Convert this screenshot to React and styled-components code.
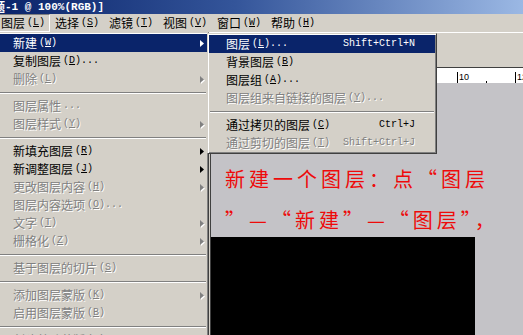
import React from "react";
import styled, { createGlobalStyle } from "styled-components";

const GlobalStyle = createGlobalStyle`
  html, body { margin: 0; padding: 0; background: #d4d0c8; overflow: hidden; }
  body { font-family: "Noto Sans CJK SC", sans-serif; }
  * { box-sizing: border-box; }
`;

const Screen = styled.div`
  position: relative;
  width: 523px;
  height: 335px;
  overflow: hidden;
  background: #d4d0c8;
  display: flex;
  flex-direction: column;
`;

const TitleBar = styled.div`
  height: 14px;
  flex-shrink: 0;
  display: flex;
  align-items: center;
  overflow: hidden;
  white-space: nowrap;
  background: linear-gradient(90deg, #0a246a 0%, #34559a 45%, #9bb8e4 100%);
`;

const TitleCjk = styled.span`
  font-family: "Noto Sans CJK SC", sans-serif;
  font-weight: 700;
  font-size: 12px;
  line-height: 14px;
  color: #fff;
  margin-left: -7px;
`;

const TitleMono = styled.span`
  font-family: "Liberation Mono", monospace;
  font-weight: 700;
  font-size: 11px;
  line-height: 14px;
  color: #fff;
`;

const MenuBar = styled.div`
  height: 18px;
  flex-shrink: 0;
  display: flex;
  margin-left: -4px;
`;

const MenuTitle = styled.div`
  width: 54px;
  display: flex;
  align-items: center;
  justify-content: center;
  border: 1px solid transparent;
  color: #000;
  ${(p) => p.$pressed && `border-color: #808080 #ffffff #ffffff #808080;`}
`;

const Cjk = styled.span`
  font-family: "Noto Sans CJK SC", sans-serif;
  font-size: 12px;
  line-height: 16px;
`;

const Key = styled.span`
  font-family: "Liberation Mono", monospace;
  font-size: 10px;
  line-height: 16px;
  margin-left: 2px;
  white-space: pre;
`;

const Workspace = styled.div`
  flex: 1;
  display: flex;
  flex-direction: column;
  min-height: 0;
`;

const OptionsBar = styled.div`
  height: 35px;
  flex-shrink: 0;
  border-top: 1px solid #ffffff;
  background: #d4d0c8;
`;

const DocRow = styled.div`
  flex: 1;
  display: flex;
  min-height: 0;
`;

const Dock = styled.div`
  width: 210px;
  flex-shrink: 0;
`;

const DocWindow = styled.div`
  flex: 1;
  display: flex;
  flex-direction: column;
  border-left: 1px solid #404040;
  border-top: 1px solid #404040;
  min-width: 0;
`;

const RulerBar = styled.div`
  height: 15px;
  flex-shrink: 0;
  background: #ffffff;
  overflow: hidden;
`;

const Canvas = styled.div`
  flex: 1;
  display: flex;
  flex-direction: column;
  background: #c4c3c7;
  padding: 75px 0 0 14px;
  min-height: 0;
`;

const Caption = styled.div`
  color: #ee0a0a;
  font-family: "Noto Sans CJK SC", sans-serif;
  font-size: 20px;
  line-height: 41px;
  letter-spacing: 4px;
  white-space: nowrap;
`;

const Artboard = styled.div`
  flex: 1;
  width: 264px;
  background: #000;
  margin: -3px 0 0 -14px;
`;

const Popup = styled.div`
  position: absolute;
  left: ${(p) => p.$left}px;
  top: ${(p) => p.$top}px;
  width: ${(p) => p.$width}px;
  background: #d4d0c8;
  border: 1px solid;
  border-color: #d4d0c8 #404040 #404040 #d4d0c8;
  box-shadow: inset 1px 1px #ffffff, inset -1px -1px #808080;
  padding: 1px;
`;

const Row = styled.div`
  height: 18px;
  display: flex;
  align-items: center;
  padding-left: 17px;
  white-space: nowrap;
  color: ${(p) => (p.$active ? "#ffffff" : p.$disabled ? "#808080" : "#000000")};
  background: ${(p) => (p.$active ? "#0a246a" : "transparent")};
  text-shadow: ${(p) => (p.$disabled && !p.$active ? "1px 1px 0 #ffffff" : "none")};
`;

const Shortcut = styled.span`
  margin-left: auto;
  margin-right: 20px;
  font-family: "Liberation Mono", monospace;
  font-size: 10px;
  line-height: 16px;
`;

const ArrowBox = styled.svg`
  margin-left: auto;
  margin-right: 3px;
  flex-shrink: 0;
  overflow: visible;
`;

const Separator = styled.div`
  height: 9px;
  display: flex;
  align-items: center;
  padding: 0 1px;
  &::after {
    content: "";
    flex: 1;
    border-top: 1px solid #808080;
    border-bottom: 1px solid #ffffff;
  }
`;

const Arrow = ({ color, emboss }) => (
  <ArrowBox width="4" height="7" viewBox="0 0 4 7">
    {emboss && <path d="M1 1 L5 4.5 L1 8 Z" fill="#ffffff" />}
    <path d="M0 0 L4 3.5 L0 7 Z" fill={color} />
  </ArrowBox>
);

const Label = ({ text, k, dots }) => (
  <>
    <Cjk>{text}</Cjk>
    {(k || dots) && (
      <Key>
        {k && (
          <>
            (<u>{k}</u>)
          </>
        )}
        {dots ? "..." : ""}
      </Key>
    )}
  </>
);

const Item = ({ text, k, dots, arrow, shortcut, disabled, active }) => (
  <Row $active={active} $disabled={disabled}>
    <Label text={text} k={k} dots={dots} />
    {shortcut && <Shortcut>{shortcut}</Shortcut>}
    {arrow && (
      <Arrow
        color={active ? "#ffffff" : disabled ? "#808080" : "#000000"}
        emboss={disabled && !active}
      />
    )}
  </Row>
);

const layerMenu = [
  { text: "新建", k: "W", arrow: true, active: true },
  { text: "复制图层", k: "D", dots: true },
  { text: "删除", k: "L", arrow: true, disabled: true },
  "sep",
  { text: "图层属性", dots: true, disabled: true },
  { text: "图层样式", k: "Y", arrow: true, disabled: true },
  "sep",
  { text: "新填充图层", k: "R", arrow: true },
  { text: "新调整图层", k: "J", arrow: true },
  { text: "更改图层内容", k: "H", arrow: true, disabled: true },
  { text: "图层内容选项", k: "O", dots: true, disabled: true },
  { text: "文字", k: "T", arrow: true, disabled: true },
  { text: "栅格化", k: "Z", arrow: true, disabled: true },
  "sep",
  { text: "基于图层的切片", k: "S", disabled: true },
  "sep",
  { text: "添加图层蒙版", k: "K", arrow: true, disabled: true },
  { text: "启用图层蒙版", k: "B", disabled: true },
  "sep",
  { text: "创建剪贴蒙版", k: "C", disabled: true },
  { text: "释放剪贴蒙版", k: "C", disabled: true },
];

const newMenu = [
  { text: "图层", k: "L", dots: true, shortcut: "Shift+Ctrl+N", active: true },
  { text: "背景图层", k: "B" },
  { text: "图层组", k: "A", dots: true },
  { text: "图层组来自链接的图层", k: "Y", dots: true, disabled: true },
  "sep",
  { text: "通过拷贝的图层", k: "C", shortcut: "Ctrl+J" },
  { text: "通过剪切的图层", k: "T", shortcut: "Shift+Ctrl+J", disabled: true },
];

const renderItems = (list) =>
  list.map((it, i) => (it === "sep" ? <Separator key={i} /> : <Item key={i} {...it} />));

const menuTitles = [
  { text: "图层", k: "L", pressed: true },
  { text: "选择", k: "S" },
  { text: "滤镜", k: "T" },
  { text: "视图", k: "V" },
  { text: "窗口", k: "W" },
  { text: "帮助", k: "H" },
];

const Ruler = () => {
  const width = 320;
  const step = 58;
  const first = 14;
  const ticks = [];
  for (let m = 0; m < 6; m++) {
    const x0 = first + m * step;
    ticks.push(<line key={`M${m}`} x1={x0 + 0.5} y1="0" x2={x0 + 0.5} y2="15" stroke="#000" />);
    ticks.push(
      <text key={`T${m}`} x={x0 + 2} y="8" fontSize="9" fontFamily="Liberation Sans, sans-serif" fill="#000">
        {2 * (m + 1)}
      </text>
    );
    for (let s = 1; s < 8; s++) {
      const x = Math.round(x0 + (s * step) / 8) + 0.5;
      const h = s === 4 ? 6 : 4;
      ticks.push(<line key={`m${m}-${s}`} x1={x} y1={15 - h} x2={x} y2="15" stroke="#000" />);
    }
  }
  return (
    <svg width={width} height="15" viewBox={`0 0 ${width} 15`}>
      {ticks}
    </svg>
  );
};

export default function App() {
  return (
    <>
      <GlobalStyle />
      <Screen>
        <TitleBar>
          <TitleCjk>题</TitleCjk>
          <TitleMono>-1 @ 100%(RGB)]</TitleMono>
        </TitleBar>
        <MenuBar>
          {menuTitles.map((m) => (
            <MenuTitle key={m.text} $pressed={m.pressed}>
              <Label text={m.text} k={m.k} />
            </MenuTitle>
          ))}
        </MenuBar>
        <Workspace>
          <OptionsBar />
          <DocRow>
            <Dock />
            <DocWindow>
              <RulerBar>
                <Ruler />
              </RulerBar>
              <Canvas>
                <Caption>新建一个图层：点“图层</Caption>
                <Caption>”—“新建”—“图层”，</Caption>
                <Artboard />
              </Canvas>
            </DocWindow>
          </DocRow>
        </Workspace>
        <Popup $left={-6} $top={32} $width={215}>
          {renderItems(layerMenu)}
        </Popup>
        <Popup $left={207} $top={33} $width={230}>
          {renderItems(newMenu)}
        </Popup>
      </Screen>
    </>
  );
}
